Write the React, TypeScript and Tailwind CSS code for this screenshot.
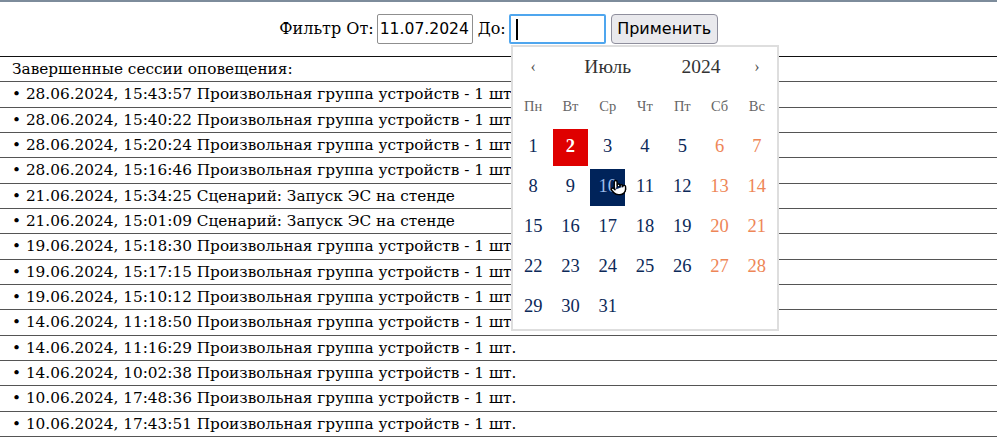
import { Pointer } from "lucide-react"

const SESSIONS = [
  "28.06.2024, 15:43:57 Произвольная группа устройств - 1 шт.",
  "28.06.2024, 15:40:22 Произвольная группа устройств - 1 шт.",
  "28.06.2024, 15:20:24 Произвольная группа устройств - 1 шт.",
  "28.06.2024, 15:16:46 Произвольная группа устройств - 1 шт.",
  "21.06.2024, 15:34:25 Сценарий: Запуск ЭС на стенде",
  "21.06.2024, 15:01:09 Сценарий: Запуск ЭС на стенде",
  "19.06.2024, 15:18:30 Произвольная группа устройств - 1 шт.",
  "19.06.2024, 15:17:15 Произвольная группа устройств - 1 шт.",
  "19.06.2024, 15:10:12 Произвольная группа устройств - 1 шт.",
  "14.06.2024, 11:18:50 Произвольная группа устройств - 1 шт.",
  "14.06.2024, 11:16:29 Произвольная группа устройств - 1 шт.",
  "14.06.2024, 10:02:38 Произвольная группа устройств - 1 шт.",
  "10.06.2024, 17:48:36 Произвольная группа устройств - 1 шт.",
  "10.06.2024, 17:43:51 Произвольная группа устройств - 1 шт.",
]

const WEEKDAYS = ["Пн", "Вт", "Ср", "Чт", "Пт", "Сб", "Вс"]

function Calendar() {
  const days = Array.from({ length: 31 }, (_, i) => i + 1)

  return (
    <div
      className="absolute left-[511px] top-[43px] w-[268px] bg-white border-2 border-[#dedede] px-[1.5px] pb-[3px]"
      style={{ fontFamily: "'Liberation Serif', serif" }}
    >
      {/* шапка: месяц / год */}
      <div className="grid grid-cols-7 h-[40px] items-center text-[#333]">
        <span className="text-center text-[16px] text-[#555]">‹</span>
        <span className="col-span-3 text-center text-[19.5px]">Июль</span>
        <span className="col-span-2 text-center text-[19.5px]">2024</span>
        <span className="text-center text-[16px] text-[#555]">›</span>
      </div>

      <div className="grid grid-cols-7 h-[39px] items-center text-[14.5px] text-[#666]">
        {WEEKDAYS.map((d) => (
          <span key={d} className="text-center">
            {d}
          </span>
        ))}
      </div>

      <div className="grid grid-cols-7 gap-y-[3.3px] pt-[3px]">
        {days.map((d) => {
          const weekend = (d - 1) % 7 >= 5
          let cls = weekend ? "text-[#ee8657]" : "text-[#0c2959]"
          if (d === 2) cls = "bg-[#df0000] text-white font-bold"
          if (d === 10) cls = "bg-[#00235a] text-[#9fbde8] relative"
          return (
            <div key={d} className={`mx-[1.15px] h-[36.7px] flex items-center justify-center text-[18.5px] ${cls}`}>
              {d}
              {d === 10 && (
                <Pointer
                  className="absolute left-[20px] top-[10px] h-[17px] w-[17px]"
                  fill="white"
                  stroke="black"
                  strokeWidth={2}
                />
              )}
            </div>
          )
        })}
      </div>
    </div>
  )
}

export default function App() {
  return (
    <div className="relative min-h-screen bg-white text-black border-t-2 border-[#7d8c9b]" style={{ fontFamily: "'DejaVu Serif', serif" }}>
      {/* фильтр */}
      <div className="h-[54px] flex items-center justify-center text-[16px]">
        <span>Фильтр От:</span>
        <input
          defaultValue="11.07.2024"
          className="ml-[3px] w-[96px] h-[30px] border border-[#8f8f8f] rounded-[2px] px-[2px] text-[15.6px] outline-none"
          style={{ fontFamily: "'DejaVu Sans', sans-serif" }}
        />
        <span className="ml-[5px]">До:</span>
        <div className="ml-[3px] w-[97px] h-[30px] border-2 border-[#4fa6ee] rounded-[2px] flex items-center px-[5px]">
          <span className="w-[2px] h-[21px] bg-black" />
        </div>
        <button
          className="ml-[5px] w-[107px] h-[30px] bg-[#e9e9ed] border border-[#8f8f9d] rounded-[4px] text-[16px]"
          style={{ fontFamily: "'DejaVu Sans', sans-serif" }}
        >
          Применить
        </button>
      </div>

      {/* список сессий */}
      <div className="border-t border-[#111] text-[15.3px]">
        <div className="h-[25.33px] leading-[24.33px] pl-[12px] border-b border-[#555]">Завершенные сессии оповещения:</div>
        {SESSIONS.map((s) => (
          <div key={s} className="h-[25.33px] leading-[24.33px] pl-[12px] border-b border-[#555] whitespace-nowrap">
            • {s}
          </div>
        ))}
        <div className="h-[25.33px]" />
      </div>

      <Calendar />
    </div>
  )
}
